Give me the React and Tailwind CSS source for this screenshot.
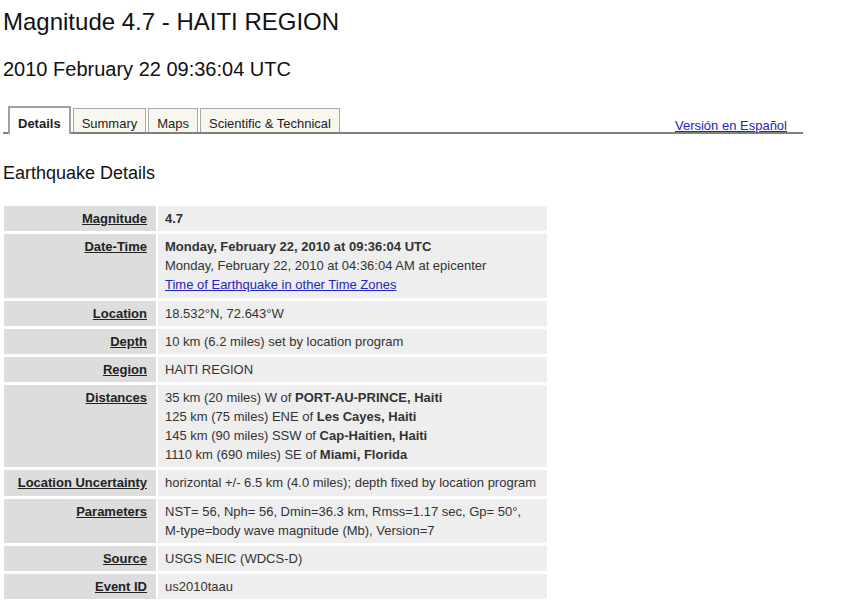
import React from "react";

const rows = [
  { label: "Magnitude", value: <b>4.7</b> },
  {
    label: "Date-Time",
    value: (
      <>
        <b>Monday, February 22, 2010 at 09:36:04 UTC</b>
        <br />
        Monday, February 22, 2010 at 04:36:04 AM at epicenter
        <br />
        <a href="#" className="text-[#2424c4] underline">Time of Earthquake in other Time Zones</a>
      </>
    ),
  },
  { label: "Location", value: "18.532°N, 72.643°W" },
  { label: "Depth", value: "10 km (6.2 miles) set by location program" },
  { label: "Region", value: "HAITI REGION" },
  {
    label: "Distances",
    value: (
      <>
        35 km (20 miles) W of <b>PORT-AU-PRINCE, Haiti</b>
        <br />
        125 km (75 miles) ENE of <b>Les Cayes, Haiti</b>
        <br />
        145 km (90 miles) SSW of <b>Cap-Haitien, Haiti</b>
        <br />
        1110 km (690 miles) SE of <b>Miami, Florida</b>
      </>
    ),
  },
  { label: "Location Uncertainty", value: "horizontal +/- 6.5 km (4.0 miles); depth fixed by location program" },
  {
    label: "Parameters",
    value: (
      <>
        NST= 56, Nph= 56, Dmin=36.3 km, Rmss=1.17 sec, Gp= 50°,
        <br />
        M-type=body wave magnitude (Mb), Version=7
      </>
    ),
  },
  { label: "Source", value: "USGS NEIC (WDCS-D)" },
  { label: "Event ID", value: "us2010taau" },
];

const tabs = ["Summary", "Maps", "Scientific & Technical"];

export default function App() {
  return (
    <div className="min-h-screen bg-white px-[3px] font-['Liberation_Sans',Arial,sans-serif] text-[13px] text-[#333]">
      <h1 className="pt-[8px] text-[24px] leading-[28px] text-[#111]">Magnitude 4.7 - HAITI REGION</h1>
      <h2 className="mt-[21px] text-[20px] leading-[24px] text-[#111]">2010 February 22 09:36:04 UTC</h2>

      <div className="mt-[25px] flex w-[800px] items-end gap-[2px] border-b-2 border-[#808080] pl-[5px]">
        <div className="-mb-[2px] border-2 border-b-0 border-[#a0a0a0] bg-white px-[8px] pt-[8px] pb-[3px] font-bold leading-[15px] text-[#222]">
          Details
        </div>
        {tabs.map((t) => (
          <div key={t} className="border border-b-0 border-[#a8a8a8] bg-[#f8f7ee] px-[8px] pt-[7px] pb-[1px] leading-[15px] text-[#222]">
            {t}
          </div>
        ))}
        <a href="#" className="ml-auto mr-[16px] leading-[13px] text-[#2424c4] underline">
          Versión en Español
        </a>
      </div>

      <h3 className="mt-[28px] text-[18px] leading-[22px] text-[#111]">Earthquake Details</h3>

      <table className="-ml-[1px] mt-[19px] table-fixed border-separate border-spacing-x-[2px] border-spacing-y-[3px]">
        <tbody>
          {rows.map((r) => (
            <tr key={r.label}>
              <td className="w-[152px] bg-[#dddddd] py-[3px] pr-[9px] text-right align-top font-bold leading-[19.125px] text-[#222] underline">
                {r.label}
              </td>
              <td className="w-[389px] bg-[#eeeeee] py-[3px] pl-[7px] pr-[4px] align-top leading-[19.125px]">{r.value}</td>
            </tr>
          ))}
        </tbody>
      </table>
    </div>
  );
}
